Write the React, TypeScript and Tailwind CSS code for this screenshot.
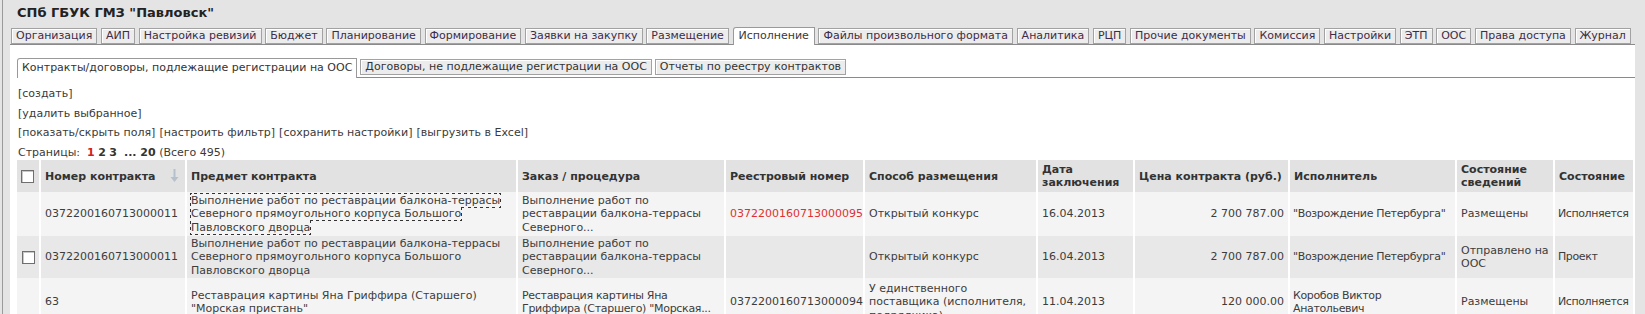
import React from 'react';

const tabs = [
  'Организация',
  'АИП',
  'Настройка ревизий',
  'Бюджет',
  'Планирование',
  'Формирование',
  'Заявки на закупку',
  'Размещение',
  'Исполнение',
  'Файлы произвольного формата',
  'Аналитика',
  'РЦП',
  'Прочие документы',
  'Комиссия',
  'Настройки',
  'ЭТП',
  'ООС',
  'Права доступа',
  'Журнал',
];

const subTabs = [
  'Контракты/договоры, подлежащие регистрации на ООС',
  'Договоры, не подлежащие регистрации на ООС',
  'Отчеты по реестру контрактов',
];

type Row = {
  check: boolean;
  num: string;
  subject: string;
  order: string;
  tightOrder?: boolean;
  reg: string;
  regRed: boolean;
  method: string;
  date: string;
  price: string;
  vendor: string;
  info: string;
  state: string;
  bg: string;
  h: string;
  focused?: boolean;
};

const rows: Row[] = [
  {
    check: false,
    num: '0372200160713000011',
    subject: 'Выполнение работ по реставрации балкона-террасы Северного прямоугольного корпуса Большого Павловского дворца',
    order: 'Выполнение работ по реставрации балкона-террасы Северного...',
    reg: '0372200160713000095',
    regRed: true,
    method: 'Открытый конкурс',
    date: '16.04.2013',
    price: '2 700 787.00',
    vendor: '"Возрождение Петербурга"',
    info: 'Размещены',
    state: 'Исполняется',
    bg: 'bg-[#f4f4f4]',
    h: 'h-[44px]',
    focused: true,
  },
  {
    check: true,
    num: '0372200160713000011',
    subject: 'Выполнение работ по реставрации балкона-террасы Северного прямоугольного корпуса Большого Павловского дворца',
    order: 'Выполнение работ по реставрации балкона-террасы Северного...',
    reg: '',
    regRed: false,
    method: 'Открытый конкурс',
    date: '16.04.2013',
    price: '2 700 787.00',
    vendor: '"Возрождение Петербурга"',
    info: 'Отправлено на ООС',
    state: 'Проект',
    bg: 'bg-[#e8e8e8]',
    h: 'h-[42px]',
  },
  {
    check: false,
    num: '63',
    subject: 'Реставрация картины Яна Гриффира (Старшего) "Морская пристань"',
    order: 'Реставрация картины Яна Гриффира (Старшего) "Морская...',
    tightOrder: true,
    reg: '0372200160713000094',
    regRed: false,
    method: 'У единственного поставщика (исполнителя, подрядчика)',
    date: '11.04.2013',
    price: '120 000.00',
    vendor: 'Коробов Виктор Анатольевич',
    info: 'Размещены',
    state: 'Исполняется',
    bg: 'bg-[#f4f4f4]',
    h: 'h-[48px]',
  },
];

function Checkbox() {
  return (
    <span className="inline-block w-[13px] h-[13px] border border-[#6f6f6f] bg-white shadow-[inset_1px_1px_0_#c8c8c8] align-middle" />
  );
}

function SortArrow() {
  return (
    <svg width="9" height="14" viewBox="0 0 9 14" className="inline-block">
      <rect x="3.5" y="0" width="2" height="9" fill="#b4c0cc" />
      <path d="M0.5 8 L4.5 13 L8.5 8 Z" fill="#b4c0cc" />
    </svg>
  );
}

export default function App() {
  const cell = 'border-r-2 border-white px-[4px] align-middle leading-[13.5px]';
  const head = 'border-r-2 border-white px-[4px] align-middle text-left font-bold leading-[13px] text-[#333]';

  return (
    <div className="min-h-[314px] bg-[#e4e4e4] font-['DejaVu_Sans',Verdana,sans-serif] text-[11px] text-[#3c3c3c] overflow-hidden">
      <div className="ml-[2px] min-h-[314px] border-l border-[#9a9a9a] pr-[10px]">
        {/* title */}
        <div className="pl-[14px] pt-[4px] h-[27px] text-[13px] font-bold leading-[17px] text-[#222]">
          СПб ГБУК ГМЗ "Павловск"
        </div>

        {/* main tabs */}
        <div className="flex items-end gap-[3.7px] pl-[8px] h-[17px]">
          {tabs.map((t) =>
            t === 'Исполнение' ? (
              <div
                key={t}
                className="relative -mb-px h-[18px] border border-b-0 border-[#999] rounded-tl-[3px] bg-white px-[5px] leading-[16px] text-[#3a3a3a] z-10 whitespace-nowrap"
              >
                {t}
              </div>
            ) : (
              <div
                key={t}
                className="h-[16px] border border-[#a2a2a2] bg-[#ececec] shadow-[inset_1px_1px_0_#ffffff] px-[4px] leading-[14px] text-[#3e2c48] whitespace-nowrap"
              >
                {t}
              </div>
            )
          )}
        </div>

        {/* panel */}
        <div className="ml-[7px] bg-white border-t border-[#8a8a8a] pt-[14px] pl-[7px]">
          {/* sub tabs */}
          <div className="flex items-end gap-[3px] border-b border-[#8a8a8a] h-[19px]">
            {subTabs.map((t, i) =>
              i === 0 ? (
                <div
                  key={t}
                  className="-mb-px h-[20px] border border-b-0 border-[#999] rounded-tl-[3px] bg-white px-[4px] leading-[18px] text-[#333] whitespace-nowrap"
                >
                  {t}
                </div>
              ) : (
                <div
                  key={t}
                  className="mb-[2px] h-[16px] border border-[#a2a2a2] bg-[#ececec] shadow-[inset_1px_1px_0_#ffffff] px-[4px] leading-[14px] text-[#333] whitespace-nowrap"
                >
                  {t}
                </div>
              )
            )}
          </div>

          {/* actions */}
          <div className="pl-[1px] pt-[9px] flex flex-col gap-[6.5px] leading-[13px] text-[#3a3a3a]">
            <div>[создать]</div>
            <div>[удалить выбранное]</div>
            <div className="flex gap-[4px]">
              <span>[показать/скрыть поля]</span>
              <span>[настроить фильтр]</span>
              <span>[сохранить настройки]</span>
              <span>[выгрузить в Excel]</span>
            </div>
            <div>
              Страницы:&nbsp;&nbsp;
              <b className="text-[#d42020]">1</b> <b className="text-[#333]">2</b> <b className="text-[#333]">3</b>
              &nbsp;&nbsp;<b className="text-[#333]">... 20</b> (Всего 495)
            </div>
          </div>

          {/* table */}
          <table className="mt-[1.5px] border-separate border-spacing-0 table-fixed w-[1618px]">
            <colgroup>
              <col className="w-[24px]" />
              <col className="w-[146px]" />
              <col className="w-[331px]" />
              <col className="w-[208px]" />
              <col className="w-[139px]" />
              <col className="w-[173px]" />
              <col className="w-[97px]" />
              <col className="w-[155px]" />
              <col className="w-[167px]" />
              <col className="w-[98px]" />
              <col className="w-[80px]" />
            </colgroup>
            <thead>
              <tr className="h-[32px] bg-[#e2e2e2]">
                <th className={head + ' text-center px-0'}>
                  <Checkbox />
                </th>
                <th className={head}>
                  <div className="flex items-center justify-between pr-[2px]">
                    <span>Номер контракта</span>
                    <SortArrow />
                  </div>
                </th>
                <th className={head}>Предмет контракта</th>
                <th className={head}>Заказ / процедура</th>
                <th className={head}>Реестровый номер</th>
                <th className={head}>Способ размещения</th>
                <th className={head}>
                  Дата
                  <br />
                  заключения
                </th>
                <th className={head}>Цена контракта (руб.)</th>
                <th className={head}>Исполнитель</th>
                <th className={head}>
                  Состояние
                  <br />
                  сведений
                </th>
                <th className={head + ' border-r-0'}>Состояние</th>
              </tr>
            </thead>
            <tbody>
              {rows.map((r, i) => (
                <tr key={i} className={r.bg + ' ' + r.h}>
                  <td className={cell + ' text-center px-0'}>{r.check && <Checkbox />}</td>
                  <td className={cell}>{r.num}</td>
                  <td className={cell}>
                    {r.focused ? (
                      <span className="outline outline-1 outline-dotted outline-[#333] outline-offset-0">
                        {r.subject}
                      </span>
                    ) : (
                      r.subject
                    )}
                  </td>
                  <td className={cell + (r.tightOrder ? ' tracking-[-0.3px]' : '')}>{r.order}</td>
                  <td className={cell + (r.regRed ? ' text-[#e03030]' : '')}>{r.reg}</td>
                  <td className={cell}>{r.method}</td>
                  <td className={cell}>{r.date}</td>
                  <td className={cell + ' text-right'}>{r.price}</td>
                  <td className={cell + ' pl-[3px] pr-[1px] tracking-[-0.35px]'}>{r.vendor}</td>
                  <td className={cell}>{r.info}</td>
                  <td className={cell + ' border-r-0 pl-[3px] pr-0 tracking-[-0.4px] whitespace-nowrap'}>{r.state}</td>
                </tr>
              ))}
            </tbody>
          </table>
        </div>
      </div>
    </div>
  );
}
